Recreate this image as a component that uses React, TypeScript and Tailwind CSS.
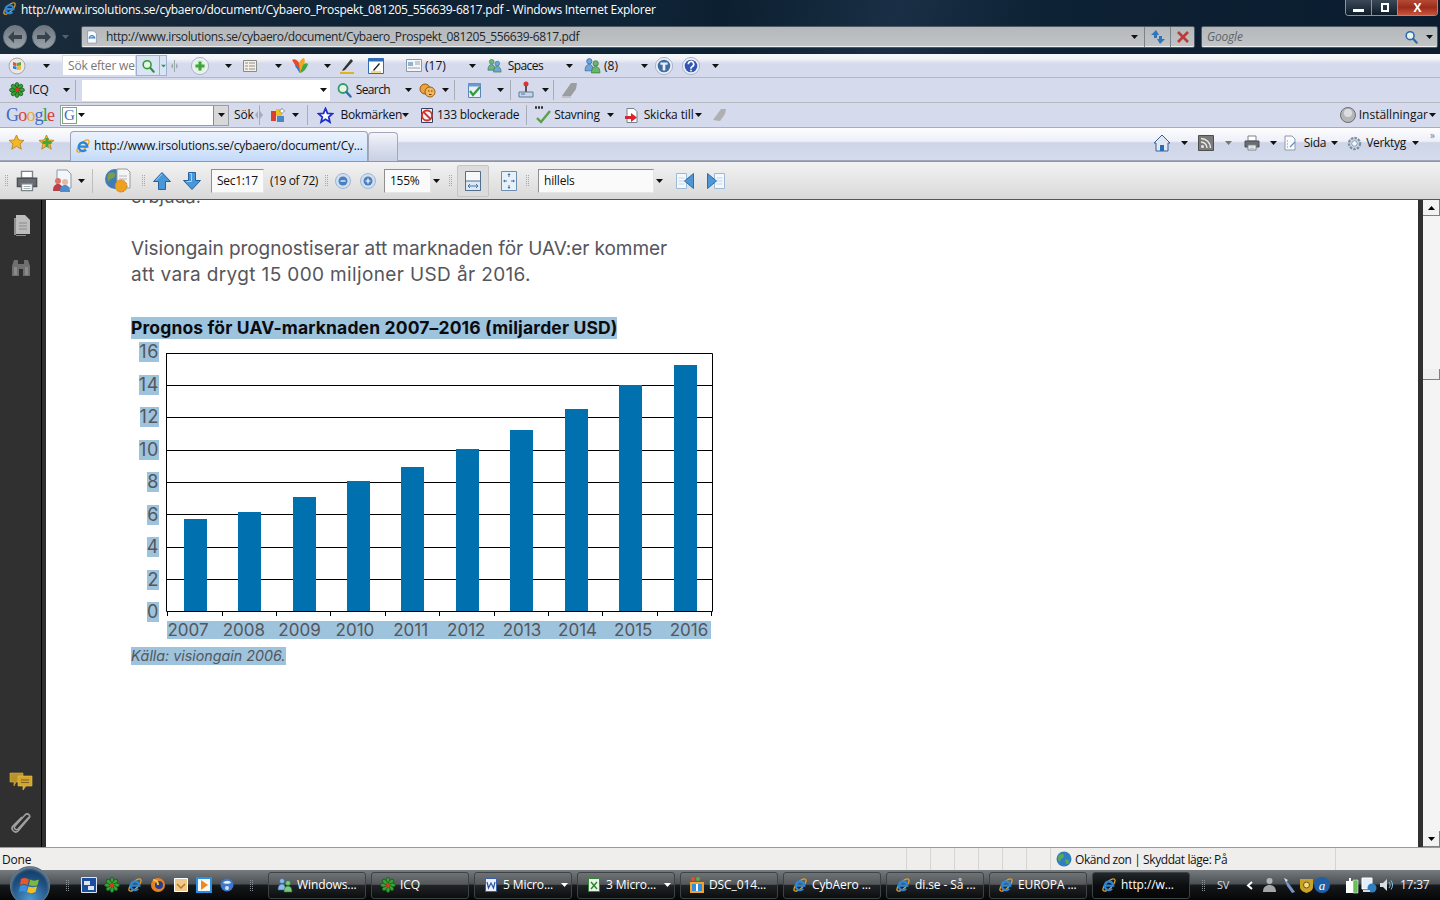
import React from "react";

const Caret = ({ className = "", color = "#111" }: { className?: string; color?: string }) => (
  <svg width="7" height="4" viewBox="0 0 7 4" className={`shrink-0 ${className}`}>
    <path d="M0 0h7L3.500 4z" fill={color} />
  </svg>
);

const Sep = ({ className = "" }: { className?: string }) => (
  <div className={`h-[20px] w-px shrink-0 bg-[#a9adb8] ${className}`} />
);

const Grip = ({ className = "", light = false }: { className?: string; light?: boolean }) => (
  <div className={`grid shrink-0 grid-cols-2 gap-px ${className}`}>
    {Array.from({ length: 12 }).map((_, i) => (
      <span key={i} className={`h-px w-px ${light ? "bg-[#8b9096]" : "bg-[#a6a6a6]"}`} />
    ))}
  </div>
);

const Ie = ({ size = 16, className = "" }: { size?: number; className?: string }) => (
  <svg width={size} height={size} viewBox="0 0 16 16" className={`shrink-0 ${className}`}>
    <ellipse cx="8" cy="8" rx="8" ry="3.200" fill="none" stroke="#e9a21f" strokeWidth="1.300" transform="rotate(-45 8 8)" />
    <path d="M4 8.600h8.300a4.300 4.300 0 1 0-1.200 3.200" fill="none" stroke="#2a86d8" strokeWidth="2.300" />
  </svg>
);

const WinOrb = () => (
  <svg width="18" height="18" viewBox="0 0 18 18" className="shrink-0">
    <circle cx="9" cy="9" r="8" fill="#e8e8ea" stroke="#a7a7ad" />
    <path d="M5 5l3.500 1v3L5 8.500z" fill="#e2552b" />
    <path d="M9 6l4-1v3.500l-4 .5z" fill="#5ba833" />
    <path d="M5 9l3.500.5v3L5 11.500z" fill="#2b7fd5" />
    <path d="M9 9.500l4-.5v3.500l-4 .5z" fill="#eeb422" />
  </svg>
);

const Flower = ({ size = 16, className = "" }: { size?: number; className?: string }) => (
  <svg width={size} height={size} viewBox="0 0 16 16" className={`shrink-0 ${className}`}>
    {[0, 45, 90, 135, 180, 225, 270, 315].map((a) => (
      <ellipse key={a} cx="8" cy="3.500" rx="2" ry="3" fill="#33a532" stroke="#123f12" strokeWidth=".6" transform={`rotate(${a} 8 8)`} />
    ))}
    <circle cx="8" cy="8" r="2.200" fill="#d9362c" />
  </svg>
);

const Lens = ({ color = "#2f9c3a", size = 16, handle = "#3a8c45" }: { color?: string; size?: number; handle?: string }) => (
  <svg width={size} height={size} viewBox="0 0 16 16" className="shrink-0">
    <circle cx="7" cy="6.500" r="4.500" fill="#e7f6e4" stroke={color} strokeWidth="1.800" />
    <path d="M10.500 10l4 4.500" stroke={handle} strokeWidth="2.400" strokeLinecap="round" />
  </svg>
);

const RoundBtn = ({ bg, children, size = 20 }: { bg: string; children: React.ReactNode; size?: number }) => (
  <svg width={size} height={size} viewBox="0 0 20 20" className="shrink-0">
    <circle cx="10" cy="10" r="9.500" fill="#eef1f6" stroke="#a3adc4" />
    <circle cx="10" cy="10" r="7" fill={bg} />
    {children}
  </svg>
);

const People = ({ a = "#6aa7dc", b = "#69b56a", size = 16 }: { a?: string; b?: string; size?: number }) => (
  <svg width={size} height={size} viewBox="0 0 16 16" className="shrink-0">
    <circle cx="5" cy="4" r="2.500" fill={a} stroke="#2b5f94" strokeWidth=".6" />
    <path d="M1 13c0-4 1.500-6 4-6s3.500 2 3.500 6z" fill={a} stroke="#2b5f94" strokeWidth=".6" />
    <circle cx="11" cy="6" r="2.500" fill={b} stroke="#2d7030" strokeWidth=".6" />
    <path d="M7 15c0-4 1.500-6 4-6s4 2 4 6z" fill={b} stroke="#2d7030" strokeWidth=".6" />
  </svg>
);

const Page = ({ children, size = 16, className = "" }: { children?: React.ReactNode; size?: number; className?: string }) => (
  <svg width={size} height={size} viewBox="0 0 16 16" className={`shrink-0 ${className}`}>
    <path d="M3 1h7l3 3v11H3z" fill="#fbfbfd" stroke="#8f99a8" />
    {children}
  </svg>
);

const Printer = ({ size = 16 }: { size?: number }) => (
  <svg width={size} height={size} viewBox="0 0 16 16" className="shrink-0">
    <path d="M4 1h8v5H4z" fill="#fff" stroke="#7d828a" />
    <path d="M1 6h14v6H1z" fill="#696d73" stroke="#4d5055" />
    <path d="M4 10h8v5H4z" fill="#fff" stroke="#7d828a" />
    <path d="M5.500 12h5M5.500 13.500h5" stroke="#9aa" strokeWidth=".7" />
  </svg>
);

const BigArrow = ({ down = false }: { down?: boolean }) => (
  <svg width="20" height="20" viewBox="0 0 20 20" className="shrink-0">
    <path
      d={down ? "M6.500 1.500h7v8h5L10 18.500 1.500 9.500h5z" : "M10 1.500l8.500 9h-5v8h-7v-8h-5z"}
      fill="#4a97d8"
      stroke="#27609e"
    />
    <path d={down ? "M7.500 2.500h2v8h-5" : "M10 3L4 9.500"} fill="none" stroke="#a4d2f4" />
  </svg>
);

const ZoomBtn = ({ plus = false }: { plus?: boolean }) => (
  <svg width="16" height="16" viewBox="0 0 16 16" className="shrink-0">
    <circle cx="8" cy="8" r="7.500" fill="#cfe0f2" stroke="#9db6d3" />
    <circle cx="8" cy="8" r="4.500" fill="#4c7fbe" />
    <path d={plus ? "M5.500 8h5M8 5.500v5" : "M5.500 8h5"} stroke="#fff" strokeWidth="1.200" />
  </svg>
);

const DocArrow = ({ flip = false }: { flip?: boolean }) => (
  <svg width="20" height="20" viewBox="0 0 20 20" className={`shrink-0 ${flip ? "-scale-x-100" : ""}`}>
    <path d="M1.500 2.500h10v15h-10z" fill="#f3f8fd" stroke="#9cb9d8" />
    <path d="M3.500 7h6M3.500 10h6M3.500 13h6" stroke="#c2d4e8" />
    <path d="M18.500 2.500v15L9.500 10z" fill="#4d97d6" stroke="#2d6da8" />
  </svg>
);

const Field = ({ className = "", children }: { className?: string; children?: React.ReactNode }) => (
  <div className={`flex h-[24px] shrink-0 items-center border border-[#8f8f8f] border-b-[#e6e6e6] border-r-[#e6e6e6] bg-[#fafafa] pl-[5px] ${className}`}>
    {children}
  </div>
);

const Task = ({ icon, label, caret = false, active = false }: { icon: React.ReactNode; label: string; caret?: boolean; active?: boolean }) => (
  <div
    className={`flex h-[27px] w-[98px] shrink-0 items-center gap-[4px] rounded-[3px] border border-[#3d4245] pl-[8px] pr-[3px] ${
      active
        ? "bg-[linear-gradient(#23272a,#0b0d0f_50%,#050607)]"
        : "bg-[linear-gradient(#6f7376,#54585b_45%,#212426_50%,#0b0d0f)]"
    }`}
  >
    {icon}
    <span className="flex-1 truncate text-[12px] tracking-[-0.1px] text-white">{label}</span>
    {caret && <Caret color="#fff" />}
  </div>
);

const yLabels = [16, 14, 12, 10, 8, 6, 4, 2, 0];
const years = [2007, 2008, 2009, 2010, 2011, 2012, 2013, 2014, 2015, 2016];
// bar x position and top edge, measured in the plot's own coordinates
const bars = [
  [18, 166],
  [72, 159],
  [127, 144],
  [181, 128],
  [235, 114],
  [290, 96],
  [344, 77],
  [399, 56],
  [453, 32],
  [508, 12],
];
const gridY = [32.5, 64.5, 97.5, 129.5, 161.5, 194.5, 226.5];
const ticks = [1, 56, 110, 164, 219, 273, 328, 382, 436, 491, 545];

const Chart = () => (
  <svg width="548" height="264" viewBox="0 0 548 264" className="block shrink-0">
    <path d="M0 .5H546.500V258.500H0.500V0" fill="none" stroke="#000" />
    {gridY.map((y) => (
      <path key={y} d={`M0 ${y}H546`} stroke="#000" />
    ))}
    {bars.map(([x, top]) => (
      <rect key={x} x={x} y={top} width="23" height={258 - top} fill="#0070ae" />
    ))}
    {ticks.map((x) => (
      <path key={x} d={`M${x}.5 258v5`} stroke="#000" />
    ))}
  </svg>
);

export default function App() {
  return (
    <div className="relative flex h-[900px] w-[1440px] flex-col overflow-hidden bg-white font-['Open_Sans',sans-serif] text-[12px] text-[#111]">
      {/* window chrome */}
      <header className="h-[54px] shrink-0 bg-[linear-gradient(100deg,#1b2c3c_0%,#0f2233_25%,#0f2437_45%,#0c1f30_50%,#1a2f45_62%,#0e2235_72%,#0a1c2e_100%)]">
        <div className="flex h-[25px] items-start">
          <Ie size={15} className="ml-[2px] mt-[1px]" />
          <span className="ml-[4px] mt-[1px] whitespace-nowrap tracking-[-0.255px] text-white">
            http://www.irsolutions.se/cybaero/document/Cybaero_Prospekt_081205_556639-6817.pdf - Windows Internet Explorer
          </span>
          <div className="ml-auto mr-[2px] flex h-[16px] w-[93px] overflow-hidden rounded-b-[4px] border border-t-0 border-[#8a949e]">
            <div className="flex w-[26px] items-end justify-center border-r border-[#8a949e] bg-[linear-gradient(#3a4857,#0f1d2b)] pb-[3px]">
              <span className="h-[3px] w-[11px] bg-white" />
            </div>
            <div className="flex w-[26px] items-center justify-center border-r border-[#8a949e] bg-[linear-gradient(#3a4857,#0f1d2b)]">
              <span className="h-[9px] w-[8px] border-2 border-white" />
            </div>
            <div className="flex flex-1 items-center justify-center bg-[linear-gradient(#b54a36,#9c2c1c_50%,#c8553a)] text-[12px] font-bold leading-none text-white">
              X
            </div>
          </div>
        </div>
        <div className="flex h-[23px] items-center">
          <div className="ml-[3px] flex h-[24px] w-[24px] items-center justify-center rounded-full border border-[#6f7b84] bg-[linear-gradient(#6d7780,#9aa2a9)]">
            <svg width="14" height="12" viewBox="0 0 14 12"><path d="M6 0L0 6l6 6V8h8V4H6z" fill="#39434b" /></svg>
          </div>
          <div className="ml-[5px] flex h-[24px] w-[24px] items-center justify-center rounded-full border border-[#6f7b84] bg-[linear-gradient(#6d7780,#9aa2a9)]">
            <svg width="14" height="12" viewBox="0 0 14 12"><path d="M8 0l6 6-6 6V8H0V4h8z" fill="#39434b" /></svg>
          </div>
          <Caret color="#56616b" className="ml-[6px]" />
          <div className="ml-[12px] flex h-[22px] w-[1114px] shrink-0 items-center rounded-[2px] border border-[#4d5a66] bg-[linear-gradient(#b4b8bb,#c2c5c7)] shadow-[inset_0_-1px_0_#eef0f1]">
            <Page size={14} className="ml-[3px]"><path d="M5 10a3 3 0 1 1 6-1H6" fill="none" stroke="#2a86d8" strokeWidth="1.400" /></Page>
            <span className="ml-[7px] tracking-[-0.365px] text-[#20262b]">http://www.irsolutions.se/cybaero/document/Cybaero_Prospekt_081205_556639-6817.pdf</span>
            <Caret className="ml-auto" />
            <div className="ml-[6px] flex h-full w-[26px] items-center justify-center border-l border-[#7c8489]">
              <svg width="16" height="16" viewBox="0 0 16 16">
                <path d="M6 1L1 6h3v3h3V6h2z" fill="#2f74c0" />
                <path d="M10 15l5-5h-3V7H9v3H7z" fill="#2f74c0" />
              </svg>
            </div>
            <div className="flex h-full w-[24px] items-center justify-center border-l border-[#7c8489]">
              <svg width="12" height="12" viewBox="0 0 12 12"><path d="M1 1l10 10M11 1L1 11" stroke="#bc3b36" strokeWidth="2.600" /></svg>
            </div>
          </div>
          <div className="ml-[6px] flex h-[22px] w-[237px] shrink-0 items-center rounded-[2px] border border-[#4d5a66] bg-[linear-gradient(#b4b8bb,#c2c5c7)] pl-[5px] shadow-[inset_0_-1px_0_#eef0f1]">
            <span className="italic tracking-[-0.2px] text-[#5d6367]">Google</span>
            <span className="ml-auto"><Lens color="#2c68b4" handle="#2c68b4" size={14} /></span>
            <Caret className="ml-[8px] mr-[4px]" />
          </div>
        </div>
      </header>

      {/* toolbars */}
      <div className="flex h-[24px] shrink-0 items-center border-b border-[#b6b8bf] bg-[linear-gradient(#f7f8fb,#f2f3f8_22%,#d5daec_42%)] pl-[8px]">
        <WinOrb />
        <Caret className="ml-[17px]" />
        <div className="ml-[12px] flex h-[21px] w-[74px] shrink-0 items-center overflow-hidden border border-[#d8dce8] bg-white pl-[5px] tracking-[-0.2px] whitespace-nowrap text-[#777]">
          Sök efter wel
        </div>
        <div className="flex h-[21px] w-[24px] shrink-0 items-center justify-center border border-[#9fb1d1] bg-[#d9e4f5]"><Lens size={14} /></div>
        <div className="flex h-[21px] w-[7px] shrink-0 items-center justify-center border border-l-0 border-[#9fb1d1] bg-[#d9e4f5]"><Caret color="#2f9c3a" className="scale-75" /></div>
        <svg width="7" height="12" viewBox="0 0 7 12" className="ml-[4px] shrink-0"><path d="M3.500 0v12" stroke="#9aa" /><path d="M2 3v6L0 6zM5 3v6l2-3z" fill="#9aa" /></svg>
        <div className="ml-[13px]"><RoundBtn bg="#dff3dd" size={18}><path d="M10 5v10M5 10h10" stroke="#3fa43a" strokeWidth="3.400" /></RoundBtn></div>
        <Caret className="ml-[16px]" />
        <svg width="16" height="14" viewBox="0 0 16 14" className="ml-[10px] shrink-0"><path d="M1.500 1.500h13v11h-13z" fill="#f3f1e8" stroke="#8b8b85" /><path d="M3 4h3M7 4h6M3 7h3M7 7h6M3 10h3M7 10h6" stroke="#77776f" strokeWidth=".8" /></svg>
        <Caret className="ml-[17px]" />
        <svg width="18" height="18" viewBox="0 0 18 18" className="ml-[9px] shrink-0">
          <path d="M9 16L1 3c3-2 6 0 8 5z" fill="#e64b2b" />
          <path d="M9 16L8 6c1-3 4-5 5-5 2 3 0 9-4 15z" fill="#f2a81e" />
          <path d="M9 16l3-8c2-2 4-2 5-1-1 4-4 8-8 9z" fill="#3fa64a" />
          <path d="M9 16L4 9c1-1 3 0 4 2z" fill="#2e7fd1" />
        </svg>
        <Caret className="ml-[15px]" />
        <svg width="16" height="18" viewBox="0 0 16 18" className="ml-[8px] shrink-0"><path d="M4 12L12 2l2 2-8 9-3 1z" fill="#333" /><path d="M1 16h14" stroke="#e2b319" strokeWidth="2" /></svg>
        <svg width="16" height="16" viewBox="0 0 16 16" className="ml-[13px] shrink-0"><path d="M.5.500h15v15H.500z" fill="#fff" stroke="#2d6db5" /><path d="M.5.500h15v3H.500z" fill="#2d6db5" /><path d="M5 12l6-7 1 1-6 7z" fill="#222" /><path d="M3 14h10" stroke="#e2b319" /></svg>
        <svg width="16" height="13" viewBox="0 0 16 13" className="ml-[22px] shrink-0"><path d="M.5.500h15v12H.500z" fill="#f5f6f8" stroke="#8e97a6" /><path d="M2 3h5v4H2z" fill="#8fb4d8" /><path d="M9 3h5M9 5h5M2 9h12" stroke="#868e9b" strokeWidth=".8" /></svg>
        <span className="ml-[3px]">(17)</span>
        <Caret className="ml-[23px]" />
        <div className="ml-[11px]"><People size={15} a="#6cb96c" b="#6aa7dc" /></div>
        <span className="ml-[6px] tracking-[-0.6px]">Spaces</span>
        <Caret className="ml-[23px]" />
        <div className="ml-[11px]"><People size={17} /></div>
        <span className="ml-[3px]">(8)</span>
        <Caret className="ml-[23px]" />
        <div className="ml-[7px]"><RoundBtn bg="#3e6da6" size={18}><path d="M6 6h8v2.500h-2.500V15h-3V8.500H6z" fill="#e8eef6" /></RoundBtn></div>
        <div className="ml-[9px]"><RoundBtn bg="#3355b5" size={18}><path d="M7 8a3 3 0 1 1 4.500 2.500L10 12v1" fill="none" stroke="#fff" strokeWidth="1.800" /><circle cx="10" cy="15" r="1" fill="#fff" /></RoundBtn></div>
        <Caret className="ml-[12px]" />
      </div>

      <div className="flex h-[25px] shrink-0 items-center border-b border-[#b6b8bf] bg-[#d5daec] pl-[9px]">
        <Flower size={16} />
        <span className="ml-[4px] tracking-[-0.2px]">ICQ</span>
        <Caret className="ml-[14px]" />
        <Sep className="ml-[5px]" />
        <div className="ml-[6px] flex h-[21px] w-[248px] shrink-0 items-center justify-end bg-white pr-[3px]"><Caret /></div>
        <div className="ml-[6px]"><Lens size={16} color="#2f9c6a" handle="#2b6fb0" /></div>
        <span className="ml-[4px] tracking-[-0.6px]">Search</span>
        <Caret className="ml-[15px]" />
        <svg width="17" height="17" viewBox="0 0 17 17" className="ml-[7px] shrink-0"><circle cx="6" cy="7" r="5" fill="#eba238" stroke="#9c5a12" /><circle cx="11" cy="10" r="5" fill="#f3b961" stroke="#9c5a12" /><path d="M9 9h1.500M12 9h1.500M10 12.500h2.500" stroke="#6d3b08" /></svg>
        <Caret className="ml-[6px]" />
        <Sep className="ml-[5px]" />
        <svg width="17" height="17" viewBox="0 0 17 17" className="ml-[11px] shrink-0"><path d="M2.500 1.500h12v14h-12z" fill="#e8f0fa" stroke="#5c86b8" /><path d="M2.500 1.500h12v3h-12z" fill="#6d9ad0" /><path d="M4 9l3 4 7-8" fill="none" stroke="#2f9c3a" strokeWidth="2.200" /></svg>
        <Caret className="ml-[14px]" />
        <Sep className="ml-[6px]" />
        <svg width="16" height="18" viewBox="0 0 16 18" className="ml-[7px] shrink-0"><circle cx="8" cy="3" r="2.500" fill="#d33" /><path d="M7 5h2v6H7z" fill="#555" /><path d="M1 11h14v5H1z" fill="#c8d6e6" stroke="#5c7b9c" /><path d="M3 13h4" stroke="#4472a8" /></svg>
        <Caret className="ml-[8px]" />
        <Sep className="ml-[4px]" />
        <svg width="18" height="16" viewBox="0 0 18 16" className="ml-[7px] shrink-0"><path d="M1 14L10 1h6l-1 6-5 7z" fill="#9b9da1" /><path d="M1 15h9" stroke="#b7b9bd" strokeWidth="1.500" /></svg>
      </div>

      <div className="flex h-[25px] shrink-0 items-center border-b border-[#a9adb8] bg-[#d5daec] pl-[6px]">
        <span className="w-[48px] shrink-0 font-['Liberation_Serif',serif] text-[18px] leading-none tracking-[-0.8px]">
          <span className="text-[#3f6cc6]">G</span>
          <span className="text-[#d9402f]">o</span>
          <span className="text-[#e3ac22]">o</span>
          <span className="text-[#3f6cc6]">g</span>
          <span className="text-[#3f9c46]">l</span>
          <span className="text-[#d9402f]">e</span>
        </span>
        <div className="ml-[6px] flex h-[21px] w-[169px] shrink-0 items-center border border-[#9a9da6] bg-white">
          <span className="ml-[1px] flex h-[17px] w-[15px] items-center justify-center border border-[#77a97a] font-['Liberation_Serif',serif] text-[15px] leading-none text-[#3f6cc6]">G</span>
          <Caret className="ml-[1px]" />
          <div className="ml-auto flex h-full w-[15px] items-center justify-center border-l border-[#8a8a8a] bg-[#d8d8d8]"><Caret /></div>
        </div>
        <span className="ml-[5px] tracking-[-0.2px]">Sök</span>
        <svg width="8" height="10" viewBox="0 0 8 10" className="ml-[1px] shrink-0"><path d="M3 1v8L0 5zM5 1v8l3-4z" fill="#aab" /></svg>
        <Sep className="-ml-[4px]" />
        <svg width="16" height="17" viewBox="0 0 16 17" className="ml-[10px] shrink-0"><path d="M1 4h5v10H1z" fill="#d9402f" /><path d="M6 2h6v7H6z" fill="#f0c020" /><path d="M7 9h7v6H7z" fill="#4a86c8" /><path d="M12 1l1 2 2 1-2 1-1 2-1-2-2-1 2-1z" fill="#fff" stroke="#555" strokeWidth=".4" /></svg>
        <Caret className="ml-[6px]" />
        <Sep className="ml-[8px]" />
        <svg width="17" height="17" viewBox="0 0 17 17" className="ml-[9px] shrink-0"><path d="M8.500 1.500l2 4.800 5 .4-3.800 3.300 1.200 5-4.400-2.700-4.400 2.700 1.200-5L1.500 6.700l5-.4z" fill="#fff" stroke="#1e2fc8" strokeWidth="1.800" /></svg>
        <span className="ml-[7px] tracking-[-0.32px]">Bokmärken</span>
        <Caret />
        <svg width="16" height="17" viewBox="0 0 16 17" className="ml-[10px] shrink-0"><path d="M2.500 1.500h11v14h-11z" fill="#eef2f8" stroke="#33415e" /><circle cx="8" cy="8.500" r="5" fill="none" stroke="#d0342c" strokeWidth="1.800" /><path d="M4.500 5l7 7" stroke="#d0342c" strokeWidth="1.800" /></svg>
        <span className="ml-[2px] whitespace-nowrap tracking-[-0.25px]">133 blockerade</span>
        <Sep className="ml-[7px]" />
        <svg width="18" height="18" viewBox="0 0 18 18" className="ml-[7px] shrink-0"><path d="M3 12l4 4L16 5" fill="none" stroke="#5ba04a" strokeWidth="2.400" /><path d="M1 1.500h9" stroke="#333" strokeWidth="2.400" strokeDasharray="2 1" /></svg>
        <span className="ml-[2px] tracking-[-0.3px]">Stavning</span>
        <Caret className="ml-[7px]" />
        <svg width="16" height="17" viewBox="0 0 16 17" className="ml-[10px] shrink-0"><path d="M3 1.500h7l3 3v11H3z" fill="#fff" stroke="#77808d" /><path d="M1 9h6V6l6 4.500L7 15v-3H1z" fill="#d8242c" /></svg>
        <span className="ml-[4px] tracking-[-0.1px]">Skicka till</span>
        <Caret className="ml-[1px]" />
        <svg width="16" height="16" viewBox="0 0 16 16" className="ml-[10px] shrink-0"><path d="M1 13L9 2h5l-1 5-5 7z" fill="#aeb0b4" /></svg>
        <svg width="18" height="18" viewBox="0 0 18 18" className="ml-auto shrink-0"><circle cx="9" cy="9" r="7.500" fill="#b4b6b8" stroke="#6c6e72" /><circle cx="9" cy="7" r="4" fill="#dcdde0" /></svg>
        <span className="ml-[2px]">Inställningar</span>
        <Caret className="mr-[4px] ml-[1px]" />
      </div>

      <div className="flex h-[34px] shrink-0 items-end border-b border-[#7f97cc] bg-[linear-gradient(#fdfdfe,#eef0f8_40%,#cdd5e8_45%,#d6dcec)] pl-[8px] shadow-[inset_0_-1px_0_#9fa6b8]">
        <svg width="17" height="17" viewBox="0 0 17 17" className="mb-[10px] shrink-0"><path d="M8.500 1l2.300 5 5.200.4-4 3.500 1.300 5.300-4.800-2.900-4.800 2.900 1.300-5.300-4-3.500 5.200-.4z" fill="#f3b72e" stroke="#b97d10" strokeWidth=".8" /></svg>
        <svg width="17" height="17" viewBox="0 0 17 17" className="mb-[10px] ml-[13px] shrink-0"><path d="M8.500 1l2.300 5 5.200.4-4 3.500 1.300 5.300-4.800-2.900-4.800 2.900 1.300-5.300-4-3.500 5.200-.4z" fill="#f3b72e" stroke="#b97d10" strokeWidth=".8" /><path d="M7.500 4h3v3h3v3h-3v3h-3v-3h-3V7h3z" fill="#44a83f" /></svg>
        <div className="ml-[15px] flex h-[30px] w-[298px] shrink-0 items-center overflow-hidden rounded-t-[4px] border border-b-0 border-[#9aa2b4] bg-[linear-gradient(#eaf2fd,#dce9fb_45%,#c4dafa)] pb-[2px] pl-[4px]">
          <Ie size={16} />
          <span className="ml-[3px] whitespace-nowrap tracking-[-0.21px]">http://www.irsolutions.se/cybaero/document/Cy...</span>
        </div>
        <div className="h-[29px] w-[30px] shrink-0 rounded-t-[4px] border border-b-0 border-[#a3a9ba] bg-[linear-gradient(#f4f5fa,#dbe0ee_50%,#c9d0e4)]" />
        <div className="mb-[9px] ml-auto flex items-center">
          <svg width="18" height="18" viewBox="0 0 18 18" className="shrink-0"><path d="M9 1L1 9h2v8h12V9h2z" fill="#dfe7f2" stroke="#3a5e96" /><path d="M7 11h4v6H7z" fill="#2c6cb2" /></svg>
          <Caret className="ml-[10px]" />
          <svg width="16" height="16" viewBox="0 0 16 16" className="ml-[10px] shrink-0"><path d="M.5.500h15v15H.500z" fill="#7a7a78" stroke="#4f4f4d" /><circle cx="4.500" cy="11.500" r="1.500" fill="#e8e8e8" /><path d="M3 7a6 6 0 0 1 6 6M3 3.500A9.500 9.500 0 0 1 12.500 13" fill="none" stroke="#e8e8e8" strokeWidth="1.500" /></svg>
          <Caret color="#777" className="ml-[11px]" />
          <div className="ml-[12px]"><Printer /></div>
          <Caret className="ml-[10px]" />
          <Page size={16} className="ml-[5px]"><path d="M5 6h1M5 9h1M5 12h1M8 12l5-5" stroke="#5d8fc4" strokeWidth="1.200" /></Page>
          <span className="ml-[6px] tracking-[-0.3px]">Sida</span>
          <Caret className="ml-[5px]" />
          <svg width="17" height="17" viewBox="0 0 17 17" className="ml-[8px] shrink-0"><circle cx="8.500" cy="8.500" r="5.500" fill="#d6dfe9" stroke="#7d8fa6" strokeWidth="2.400" strokeDasharray="2.500 1.100" /><circle cx="8.500" cy="8.500" r="2.800" fill="#f3f6fa" stroke="#8597ad" /></svg>
          <span className="ml-[3px] tracking-[-0.3px]">Verktyg</span>
          <Caret className="ml-[6px]" />
          <span className="relative -top-[8px] ml-[11px] mr-[5px] text-[10px] leading-none text-[#6b7fa8]">»</span>
        </div>
      </div>

      {/* pdf toolbar */}
      <div className="flex h-[38px] shrink-0 items-center border-b border-[#555] bg-[linear-gradient(#f2f2f2,#d9d9d9)] pl-[5px]">
        <Grip />
        <div className="ml-[8px]"><Printer size={22} /></div>
        <svg width="24" height="24" viewBox="0 0 24 24" className="ml-[12px] shrink-0">
          <path d="M7 1h10l4 4v14H7z" fill="#f3f6fb" stroke="#8f99a8" />
          <circle cx="8" cy="12" r="3" fill="#d9746a" />
          <path d="M3 22c0-5 2-7 5-7s5 2 5 7z" fill="#b9404a" />
          <circle cx="15" cy="13" r="3" fill="#e5b7a4" />
          <path d="M10 23c0-5 2-7 5-7s5 2 5 7z" fill="#4a8ed0" />
        </svg>
        <Caret className="ml-[4px]" />
        <div className="ml-[7px] h-[24px] w-px bg-[#bdbdbd]" />
        <svg width="28" height="28" viewBox="0 0 28 28" className="ml-[11px] shrink-0">
          <circle cx="11" cy="12" r="10" fill="#3c7cb8" />
          <path d="M5 6c4-2 7 0 6 3s-5 2-6 5-3-5 0-8zM13 13c3-1 6 0 5 4s-5 4-5 1 0-4 0-5z" fill="#7a9c4e" />
          <path d="M13 2h10l3 3v16H13z" fill="#f4f5f7" stroke="#9a9a9a" />
          <path d="M15 9h8M15 12h8" stroke="#b5b5b5" />
          <circle cx="17" cy="19" r="6" fill="#eea020" stroke="#c97a10" strokeDasharray="2 1" />
        </svg>
        <Grip className="ml-[10px]" />
        <div className="ml-[7px]"><BigArrow /></div>
        <div className="ml-[10px]"><BigArrow down /></div>
        <Field className="ml-[9px] w-[53px] tracking-[-0.3px]">Sec1:17</Field>
        <span className="ml-[6px] whitespace-nowrap tracking-[-0.4px]">(19 of 72)</span>
        <Grip className="ml-[7px]" />
        <div className="ml-[7px]"><ZoomBtn /></div>
        <div className="ml-[9px]"><ZoomBtn plus /></div>
        <Field className="ml-[8px] w-[47px] tracking-[-0.3px]">155%</Field>
        <Caret className="ml-[2px]" />
        <Grip className="ml-[9px]" />
        <div className="ml-[5px] flex h-[32px] w-[32px] shrink-0 items-center justify-center rounded-[2px] border border-[#c5c5c5] bg-[#dcdcdc]">
          <svg width="18" height="22" viewBox="0 0 18 22"><path d="M1.500 1.500h15v19h-15z" fill="#f5f7f9" stroke="#526e8c" /><path d="M1.500 11h15v9.500h-15z" fill="#dce8f3" stroke="#526e8c" /><path d="M4 16h10M4 16l2-2M4 16l2 2M14 16l-2-2M14 16l-2 2" stroke="#3f75ad" /></svg>
        </div>
        <svg width="18" height="22" viewBox="0 0 18 22" className="ml-[11px] shrink-0"><path d="M1.500 1.500h15v19h-15z" fill="#e9f1f8" stroke="#6b8fb3" /><path d="M9 4v3M9 15v3M4 11h3M11 11h3" stroke="#3f75ad" /><path d="M7.500 5L9 3l1.500 2zM7.500 17L9 19l1.500-2zM5 9.500L3 11l2 1.500zM13 9.500l2 1.500-2 1.500z" fill="#3f75ad" /></svg>
        <Grip className="ml-[8px]" />
        <Field className="ml-[9px] w-[116px] tracking-[-0.2px]">hillels</Field>
        <Caret className="ml-[2px]" />
        <div className="ml-[12px]"><DocArrow /></div>
        <div className="ml-[11px]"><DocArrow flip /></div>
      </div>

      {/* document area */}
      <main className="flex min-h-0 flex-1 bg-[#303030]">
        <aside className="flex w-[41px] shrink-0 flex-col items-center pb-[13px] pt-[14px]">
          <svg width="20" height="23" viewBox="0 0 20 23" className="shrink-0"><path d="M1 4h4v18h10v-1H3V4z" fill="#8f8f8f" /><path d="M5 1h9l5 5v14H5z" fill="#bdbdbd" /><path d="M8 9h8M8 12h8M8 15h8" stroke="#8a8a8a" /></svg>
          <svg width="22" height="20" viewBox="0 0 22 20" className="mt-[21px] shrink-0"><path d="M2 8l2-6h4v4h6V2h4l2 6v10h-7v-7H9v7H2z" fill="#6f6f6f" /><path d="M4 9h3v8H4zM15 9h3v8h-3z" fill="#8a8a8a" /></svg>
          <svg width="24" height="20" viewBox="0 0 24 20" className="mt-auto shrink-0"><path d="M1 1h13v9H7l-2 4v-4H1z" fill="#b8922a" stroke="#d9b53f" strokeWidth=".6" /><path d="M9 4h14v10h-6l-3 4v-4H9z" fill="#d2a62c" stroke="#edc74a" strokeWidth=".6" /><path d="M12 8h8M12 10.500h8" stroke="#80611a" /></svg>
          <svg width="22" height="24" viewBox="0 0 22 24" className="mt-[18px] shrink-0"><path d="M19 6L8 18c-2 2-5-1-3-3L15 4c3-3 6 1 4 3L8 20c-3 3-8-2-5-5L12 6" fill="none" stroke="#a0a0a0" strokeWidth="1.600" transform="translate(0 1)" /></svg>
        </aside>
        <div className="w-px shrink-0 bg-black" />
        <div className="w-[4px] shrink-0" />
        <div className="w-[1372px] shrink-0 overflow-hidden bg-white">
          <div className="relative -mt-[16px] pl-[85px] text-[#55565c]">
            <p className="h-[52px] font-['Inter',sans-serif] text-[18px] leading-[26px]">erbjuda.</p>
            <p className="whitespace-nowrap font-['Inter',sans-serif] text-[19px] leading-[26px] tracking-[-0.05px]">Visiongain prognostiserar att marknaden för UAV:er kommer</p>
            <p className="whitespace-nowrap font-['Inter',sans-serif] text-[19px] leading-[26px] tracking-[0.37px]">att vara drygt 15 000 miljoner USD år 2016.</p>
            <h2 className="mt-[29px] w-[486px] bg-[#9dc3dd] text-center font-['Inter',sans-serif] text-[17.500px] font-bold leading-[22px] tracking-[0.15px] whitespace-nowrap text-[#0b0b0f]">
              Prognos för UAV-marknaden 2007–2016 (miljarder USD)
            </h2>
            <div className="mt-[3px] flex">
              <div className="ml-[7px] flex h-[280px] w-[21px] shrink-0 flex-col items-end justify-between font-['Inter',sans-serif] text-[18px] leading-[20px] tracking-[0.6px]">
                {yLabels.map((n) => (
                  <span key={n} className="bg-[#9dc3dd]">{n}</span>
                ))}
              </div>
              <div className="ml-[7px] mt-[11px]">
                <Chart />
              </div>
            </div>
            <div className="-mt-[1px] ml-[36px] flex h-[18px] w-[544px] items-center justify-between bg-[#9dc3dd] pr-[1px] font-['Inter',sans-serif] text-[17px] leading-none">
              {years.map((y) => (
                <span key={y} className="w-[42px] text-center">{y}</span>
              ))}
            </div>
            <p className="mt-[8px] w-[155px] whitespace-nowrap bg-[#9dc3dd] font-['Inter',sans-serif] text-[14.300px] italic leading-[18px]">Källa: visiongain 2006.</p>
          </div>
        </div>
        <div className="w-[5px] shrink-0" />
        <div className="flex w-[17px] shrink-0 flex-col bg-[#f4f4f4]">
          <div className="flex h-[16px] items-center justify-center border-b border-r border-[#808080] bg-[#f2f2f2]">
            <svg width="7" height="4" viewBox="0 0 7 4"><path d="M0 4h7L3.500 0z" fill="#000" /></svg>
          </div>
          <div className="mt-[153px] h-[11px] border-b border-r border-[#808080] bg-[#efefef]" />
          <div className="mt-auto flex h-[16px] items-center justify-center border-b border-r border-[#808080] bg-[#f2f2f2]">
            <Caret color="#000" />
          </div>
        </div>
      </main>

      {/* status bar */}
      <footer className="flex h-[23px] shrink-0 items-center border-t border-[#9a9a9a] bg-[#f0eeec] pl-[2px]">
        <span className="relative top-px w-[904px] shrink-0 tracking-[-0.2px]">Done</span>
        <div className="flex h-full">
          {[0, 1, 2, 3, 4, 5].map((i) => (
            <div key={i} className="h-full w-[24px] border-l border-[#d6d4d0]" />
          ))}
        </div>
        <div className="flex h-full w-[286px] shrink-0 items-center border-l border-r border-[#d6d4d0] pl-[5px]">
          <svg width="16" height="16" viewBox="0 0 16 16" className="shrink-0"><circle cx="8" cy="8" r="7.500" fill="#2f7fc0" /><path d="M3 4c3-2 5-1 5 1s-3 2-4 5-3-3-1-6zM9 9c2-1 4 0 4 2s-3 3-3 1z" fill="#5cab4b" /></svg>
          <span className="relative top-px ml-[3px] whitespace-nowrap tracking-[-0.42px]">Okänd zon | Skyddat läge: På</span>
        </div>
      </footer>

      {/* taskbar */}
      <nav className="flex h-[30px] shrink-0 items-center bg-[linear-gradient(#767b7f,#4c5155_45%,#15181a_52%,#050607)] pl-[66px]">
        <Grip light />
        <div className="ml-[12px] flex items-center gap-[7px]">
          <svg width="16" height="16" viewBox="0 0 16 16" className="shrink-0"><path d="M.5.500h15v15H.500z" fill="#1d4e9e" stroke="#dce6f3" /><path d="M3 4h6v4H3zM7 9h6v4H7z" fill="#dce6f3" /></svg>
          <Flower size={16} />
          <Ie size={16} />
          <svg width="16" height="16" viewBox="0 0 16 16" className="shrink-0"><circle cx="8" cy="8" r="7" fill="#e97f23" /><circle cx="9" cy="8" r="4" fill="#28408a" /><path d="M3 3c3 0 5 2 5 5" stroke="#f7c13d" strokeWidth="2" fill="none" /></svg>
          <svg width="16" height="16" viewBox="0 0 16 16" className="shrink-0"><path d="M1.500 1.500h13v13h-13z" fill="#f0c88a" stroke="#fff" /><path d="M4 7l4 4 4-4" fill="none" stroke="#b17a2a" strokeWidth="1.500" /></svg>
          <svg width="16" height="16" viewBox="0 0 16 16" className="shrink-0"><path d="M0 0h16v16H0z" fill="#2b8fe0" /><path d="M2 2h12v12H2z" fill="#f8f8f8" /><path d="M5 3l7 5-7 5z" fill="#ee8a1a" /></svg>
          <svg width="16" height="16" viewBox="0 0 16 16" className="shrink-0"><circle cx="8" cy="8" r="6.500" fill="#3f78c8" /><path d="M4 6c2-3 7-3 8 0-2 1-6 1-8 0z" fill="#e6eef7" /><circle cx="8" cy="11" r="2" fill="#d2e2f3" /></svg>
        </div>
        <Grip light className="ml-[15px]" />
        <div className="ml-[15px] flex items-center gap-[5px]">
          <Task icon={<People size={16} a="#8bbbe8" b="#7cc77c" />} label="Windows..." />
          <Task icon={<Flower size={16} />} label="ICQ" />
          <Task
            icon={<svg width="16" height="16" viewBox="0 0 16 16" className="shrink-0"><path d="M2.500 1.500h11v13h-11z" fill="#eaf0fa" stroke="#3a5fa8" /><path d="M4 5l1.500 6L8 6l2.500 5L12 5" fill="none" stroke="#2a4f9c" strokeWidth="1.200" /></svg>}
            label="5 Micro..."
            caret
          />
          <Task
            icon={<svg width="16" height="16" viewBox="0 0 16 16" className="shrink-0"><path d="M2.500 1.500h11v13h-11z" fill="#e6f4e4" stroke="#35843a" /><path d="M5 5l6 7M11 5l-6 7" stroke="#2d7e33" strokeWidth="1.400" /></svg>}
            label="3 Micro..."
            caret
          />
          <Task
            icon={<svg width="16" height="18" viewBox="0 0 16 18" className="shrink-0"><path d="M1 6h14v11H1z" fill="#f2a32d" /><path d="M3 8h10v7H3z" fill="#2f8ee0" /><path d="M7 8h2v7H7z" fill="#fff" /><circle cx="4" cy="3" r="2" fill="#e64b2b" /><circle cx="9" cy="3" r="2" fill="#5cab4b" /></svg>}
            label="DSC_014..."
          />
          <Task icon={<Ie />} label="CybAero ..." />
          <Task icon={<Ie />} label="di.se - Så ..." />
          <Task icon={<Ie />} label="EUROPA ..." />
          <Task icon={<Ie />} label="http://w..." active />
        </div>
        <Grip light className="ml-[12px]" />
        <span className="ml-[12px] text-[11px] tracking-[-0.3px] text-[#d5dde5]">SV</span>
        <svg width="7" height="9" viewBox="0 0 7 9" className="ml-[17px] shrink-0"><path d="M6 1L2 4.500 6 8" fill="none" stroke="#fff" strokeWidth="2" /></svg>
        <svg width="15" height="17" viewBox="0 0 15 17" className="ml-[9px] shrink-0"><circle cx="7.500" cy="4" r="3" fill="#b5b5b5" /><path d="M1 15c0-5 3-7 6.500-7s6.500 2 6.500 7z" fill="#a5a5a5" /></svg>
        <svg width="15" height="17" viewBox="0 0 15 17" className="ml-[5px] shrink-0"><path d="M2 1l6 7 5 7-3 1-5-7z" fill="#7797c4" /><path d="M2 1l4 2-2 2z" fill="#d8e2ef" /></svg>
        <svg width="15" height="17" viewBox="0 0 15 17" className="ml-[2px] shrink-0"><path d="M1 2h13v8c0 3-3 5-6.500 6C4 15 1 13 1 10z" fill="#c9a227" /><circle cx="7.500" cy="8" r="3" fill="#f1dc82" stroke="#6c5410" /></svg>
        <div className="flex h-[16px] w-[16px] shrink-0 items-center justify-center rounded-full bg-[#1f5fa8] font-['Liberation_Serif',serif] text-[13px] italic leading-none text-white">a</div>
        <svg width="14" height="17" viewBox="0 0 14 17" className="ml-[15px] shrink-0"><path d="M1 4h3V1h2v3h3v2H8v10H1z" fill="#fff" /><path d="M8 3h5v13H8z" fill="#67c24f" stroke="#eef" strokeWidth=".6" /></svg>
        <svg width="16" height="17" viewBox="0 0 16 17" className="ml-[2px] shrink-0"><path d="M1 1h10v11H1z" fill="#e4eef9" stroke="#fff" /><circle cx="11" cy="11" r="4.500" fill="#2f7fc0" /><path d="M2 14h7" stroke="#cfd9e4" strokeWidth="2" /></svg>
        <svg width="14" height="14" viewBox="0 0 14 14" className="ml-[2px] shrink-0"><path d="M1 5h3l4-4v12L4 9H1z" fill="#d7dde3" /><path d="M10 4c1.500 2 1.500 4 0 6M12 2.500c2 3 2 6 0 9" fill="none" stroke="#7fc3ea" /></svg>
        <span className="ml-[7px] tracking-[-0.25px] text-[#eef1f4]">17:37</span>
      </nav>

      {/* start orb overlaps the taskbar top */}
      <div className="absolute left-[10px] top-[866px] flex h-[40px] w-[40px] items-center justify-center rounded-full border border-[#6f7d88] bg-[radial-gradient(circle_at_50%_85%,#4d9ad0,#1d4f80_55%,#0d2a48)] shadow-[inset_0_2px_3px_rgba(255,255,255,0.45)]">
        <svg width="22" height="22" viewBox="0 0 22 22">
          <path d="M2 4c3-1.500 5-1 8 .5L8.500 10C6 8.500 4 8.500 1 10z" fill="#e8562b" />
          <path d="M11 4.500c3 1.500 5 1.500 9 0L18.500 10c-3 1.500-5.500 1-8.500 0z" fill="#7cb93c" />
          <path d="M1 11c3-1.500 5-1 7.500 0L7 17c-2.500-1-4.500-1-7 0z" fill="#3b8edb" />
          <path d="M9.500 11.500c3 1 5.500 1 8.500 0L16.500 17c-3 1.500-5.500 1.500-8.500 0z" fill="#f0c026" />
        </svg>
      </div>
    </div>
  );
}
